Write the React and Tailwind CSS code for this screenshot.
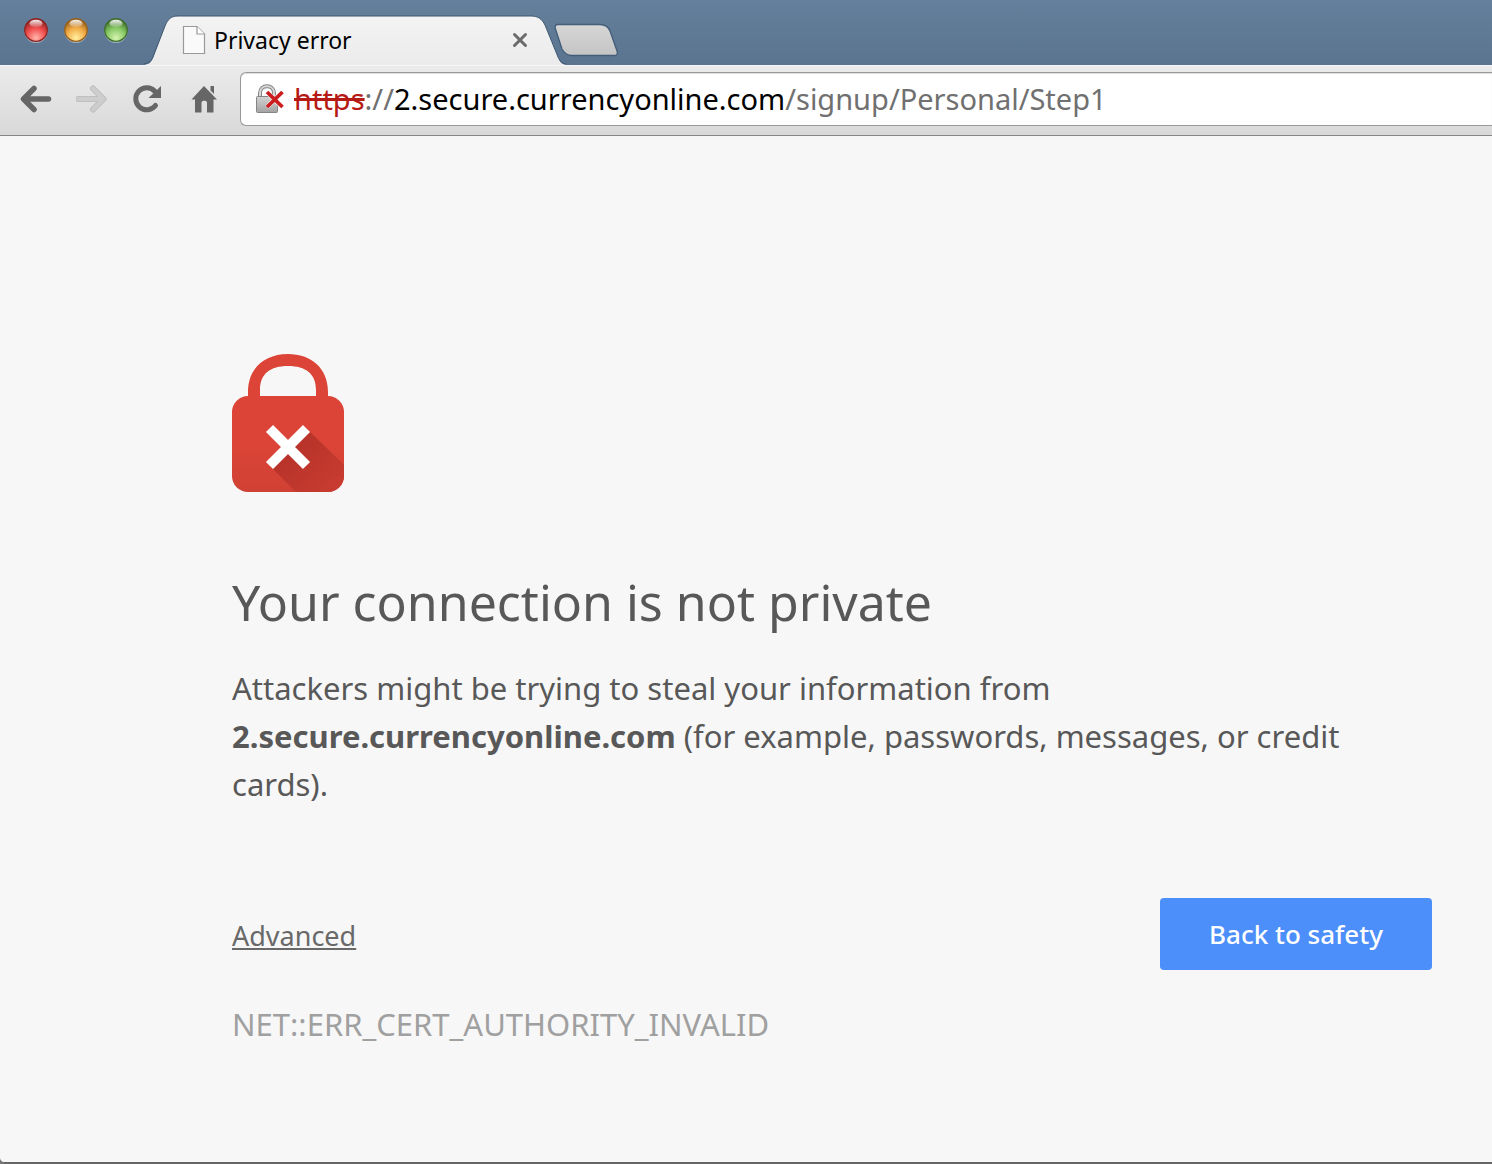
import { useState } from "react";

const PAGE_URL = "https://2.secure.currencyonline.com/signup/Personal/Step1";

const TrafficLight = ({ id, label, edge, base, glow }) => (
  <button type="button" aria-label={label} className="h-7 w-6">
    <svg viewBox="0 0 24 28" className="h-7 w-6">
      <defs>
        <radialGradient id={id} cx="0.5" cy="0.85" r="0.8">
          <stop offset="0" stopColor={glow} />
          <stop offset="0.55" stopColor={base} />
          <stop offset="1" stopColor={edge} />
        </radialGradient>
        <linearGradient id={`${id}-shine`} x1="0" y1="0" x2="0" y2="1">
          <stop offset="0" stopColor="#fff" stopOpacity="0.95" />
          <stop offset="1" stopColor="#fff" stopOpacity="0.1" />
        </linearGradient>
      </defs>
      <circle cx="12" cy="14.5" r="11.5" fill="#c3d0dc" opacity="0.6" />
      <circle cx="12" cy="13" r="11.3" fill={`url(#${id})`} stroke={edge} strokeWidth="1.3" />
      <ellipse cx="12" cy="6.5" rx="6.5" ry="3.8" fill={`url(#${id}-shine)`} />
    </svg>
  </button>
);

const TabStrip = () => (
  <header className="flex h-[65px] items-end bg-linear-to-b from-[#65809c] to-[#5a7490]">
    <div className="flex gap-4 self-start pt-[17px] pl-6">
      <TrafficLight id="close" label="Close window" edge="#8d2422" base="#f04c4c" glow="#ffb5ac" />
      <TrafficLight id="minimize" label="Minimize window" edge="#96601c" base="#f2ab45" glow="#fff0a0" />
      <TrafficLight id="zoom" label="Zoom window" edge="#3f6f2c" base="#86c763" glow="#d5f5b0" />
    </div>

    <div className="relative ml-4 flex h-[50px] w-[422px] items-center px-[38px]">
      <svg viewBox="0 0 422 50" className="absolute inset-0 h-full w-full" aria-hidden="true">
        <defs>
          <linearGradient id="tab" x1="0" y1="0" x2="0" y2="1">
            <stop offset="0" stopColor="#f3f3f3" />
            <stop offset="1" stopColor="#ebebeb" />
          </linearGradient>
        </defs>
        <path
          d="M0 50 C6 49 7 47 9 43 L21 11 C24 4 27 1 34 1 H387 C394 1 398 4 401 10 L414 42 C416 47 417 49 422 50 Z"
          fill="url(#tab)"
        />
        <path
          d="M0 49 C6 48 7 46 9 42 L21 11 C24 4 27 1 34 1 H387 C394 1 398 4 401 10 L414 42 C416 46 417 48 422 49"
          fill="none"
          stroke="#3f5871"
        />
      </svg>
      <button type="button" className="relative flex flex-1 items-center gap-2 text-[23px] leading-8 text-black">
        <svg viewBox="0 0 24 30" className="h-[30px] w-6" aria-hidden="true">
          <path d="M1.5 1.5 H15 L22.5 9 V28.5 H1.5 Z" fill="#fafafa" stroke="#999" strokeWidth="1.2" />
          <path d="M15 1.5 V9 H22.5" fill="#fff" stroke="#999" strokeWidth="1.2" />
        </svg>
        Privacy error
      </button>
      <button type="button" aria-label="Close tab" className="relative">
        <svg viewBox="0 0 16 16" className="h-4 w-4">
          <path d="M2.5 2.5 L13.5 13.5 M13.5 2.5 L2.5 13.5" stroke="#6b6b6b" strokeWidth="3" strokeLinecap="round" />
        </svg>
      </button>
    </div>

    <button type="button" aria-label="New tab" className="-ml-3 mb-2">
      <svg viewBox="0 0 64 34" className="h-[34px] w-16">
        <defs>
          <linearGradient id="new-tab" x1="0" y1="0" x2="0" y2="1">
            <stop offset="0" stopColor="#d6d6d6" />
            <stop offset="1" stopColor="#c4c4c4" />
          </linearGradient>
        </defs>
        <path
          d="M4 1.5 H46 C51 1.5 54 3 56 8 L63 28 C64 31 63 32.5 60 32.5 H18 C13 32.5 10 30 8 26 L1.5 6 C0.500 3 1.500 1.5 4 1.5 Z"
          fill="url(#new-tab)"
          stroke="#435d78"
          strokeWidth="1.3"
        />
      </svg>
    </button>
  </header>
);

const BrokenLock = () => (
  <svg viewBox="0 0 30 32" className="h-8 w-[30px] shrink-0" aria-hidden="true">
    <defs>
      <linearGradient id="small-lock" x1="0" y1="0" x2="0" y2="1">
        <stop offset="0" stopColor="#d2d2d2" />
        <stop offset="1" stopColor="#a3a3a3" />
      </linearGradient>
    </defs>
    <path d="M5 13 V10 C5 1 19 1 19 10 V13" fill="none" stroke="#858585" strokeWidth="4" />
    <path d="M5 13 V10 C5 1 19 1 19 10 V13" fill="none" stroke="#d8d8d8" strokeWidth="2" />
    <rect x="1.5" y="13.5" width="21" height="16" rx="1" fill="url(#small-lock)" stroke="#858585" />
    <path d="M12 9 L27 24 M27 9 L12 24" stroke="#fff" strokeWidth="5" opacity="0.7" />
    <path d="M12 9 L27.5 24 M27.5 9 L12 24" stroke="#cb1d1d" strokeWidth="3.8" />
  </svg>
);

// The coloured URL is shown until the field gets focus.
const Omnibox = () => {
  const [url, setUrl] = useState(PAGE_URL);
  const [editing, setEditing] = useState(false);

  return (
    <div className="relative flex h-[54px] flex-1 items-center rounded-l-md border border-r-0 border-[#999] bg-white pl-[14px] shadow-[inset_0_1px_1px_#ddd]">
      <BrokenLock />
      <input
        type="text"
        aria-label="Address"
        value={editing ? url : ""}
        onChange={(e) => setUrl(e.target.value)}
        onFocus={() => setEditing(true)}
        onBlur={() => setEditing(false)}
        className="h-full flex-1 pl-2 text-[29px] text-black outline-none"
      />
      {!editing && (
        <p className="pointer-events-none absolute left-[53px] text-[29px] leading-10 whitespace-nowrap text-[#707070]">
          <span className="text-[#b51a14] line-through decoration-3">https</span>://
          <span className="text-black">2.secure.currencyonline.com</span>
          /signup/Personal/Step1
        </p>
      )}
    </div>
  );
};

const Toolbar = () => (
  <nav className="flex h-[71px] items-center border-t border-b border-t-[#f6f6f6] border-b-[#858585] bg-linear-to-b from-[#ebebeb] to-[#d9d9d9] pb-[3px] pl-5">
    <div className="mr-5 flex items-center gap-6">
      <button type="button" aria-label="Back">
        <svg viewBox="0 0 32 28" className="h-7 w-8">
          <path d="M14 3.5 L3.5 14 L14 24.5 M4 14 H28.5" fill="none" stroke="#666" strokeWidth="5.5" strokeLinecap="round" strokeLinejoin="round" />
        </svg>
      </button>
      <button type="button" aria-label="Forward" disabled>
        <svg viewBox="0 0 32 28" className="h-7 w-8">
          <path d="M17 3.5 L27.5 14 L17 24.5 M27 14 H2.5" fill="none" stroke="#bababa" strokeWidth="6" strokeLinecap="round" strokeLinejoin="round" />
          <path d="M17 3.5 L27.5 14 L17 24.5 M27 14 H2.5" fill="none" stroke="#cdcdcd" strokeWidth="4.5" strokeLinecap="round" strokeLinejoin="round" />
        </svg>
      </button>
      <button type="button" aria-label="Reload">
        <svg viewBox="0 0 32 28" className="h-7 w-8">
          <path d="M23 6.5 A11 11 0 1 0 23.5 20.5" fill="none" stroke="#666" strokeWidth="5" strokeLinecap="round" />
          <path d="M29 1 V13 H16.5 Z" fill="#666" />
        </svg>
      </button>
      <button type="button" aria-label="Home">
        <svg viewBox="0 0 32 28" className="h-7 w-8">
          <path d="M16 1 L29 14.5 H25.5 V27.5 H19 V17.5 C19 15 13.5 15 13.5 17.5 V27.5 H7 V14.5 H3.500 Z" fill="#666" />
          <path d="M22.5 1 H26 V9 L22.5 5.5 Z" fill="#666" />
        </svg>
      </button>
    </div>
    <Omnibox />
  </nav>
);

const WarningLock = () => (
  <svg viewBox="0 0 112 138" className="h-[138px] w-28" role="img" aria-label="Broken lock">
    <defs>
      <linearGradient id="lock-body" x1="0" y1="0" x2="0" y2="1">
        <stop offset="0.5" stopColor="#dc4437" />
        <stop offset="1" stopColor="#cf4134" />
      </linearGradient>
      <linearGradient id="lock-shadow" x1="0" y1="0" x2="1" y2="1">
        <stop offset="0.2" stopColor="#b8332a" />
        <stop offset="0.7" stopColor="#cb3d31" />
      </linearGradient>
      <clipPath id="lock-clip">
        <rect y="42" width="112" height="96" rx="16" />
      </clipPath>
    </defs>
    <path d="M16 43 V38 C16 14 33 0 56 0 C79 0 96 14 96 38 V43 H84 V36 C84 20 74 12 56 12 C38 12 28 20 28 36 V43 Z" fill="#dc4437" />
    <rect y="42" width="112" height="96" rx="16" fill="url(#lock-body)" />
    <path d="M78 78 L138 136 V170 H96 L41 115 L56 93 Z" fill="url(#lock-shadow)" clipPath="url(#lock-clip)" />
    <path d="M37.5 74.5 L74.5 111.5 M74.5 74.5 L37.5 111.5" stroke="#fff" strokeWidth="10" />
  </svg>
);

const App = () => (
  <div className="relative flex min-h-screen flex-col bg-[#f7f7f7] font-['Noto_Sans',sans-serif]">
    <TabStrip />
    <Toolbar />
    <main className="flex-1 border-b-2 border-[#666] pt-[218px] pr-[60px] pl-[232px] text-[#585858]">
      <WarningLock />
      <h1 className="mt-[78px] text-[50px] leading-[64px]">Your connection is not private</h1>
      <p className="mt-[30px] text-[31px] leading-[48px]">
        Attackers might be trying to steal your information from{" "}
        <strong>2.secure.currencyonline.com</strong> (for example, passwords, messages, or credit cards).
      </p>
      <div className="mt-[90px] flex items-center justify-between">
        <a href="#advanced" className="pt-1 text-[27px] leading-10 text-[#696969] underline decoration-2 underline-offset-2">
          Advanced
        </a>
        <button type="button" className="h-[72px] min-w-[272px] rounded-sm bg-[#4c8efa] px-8 text-[26px] font-medium text-white">
          Back to safety
        </button>
      </div>
      <p className="mt-[30px] text-[31px] leading-[48px] text-[#a0a0a0]">NET::ERR_CERT_AUTHORITY_INVALID</p>
    </main>
    {/* rounded window corner */}
    <svg viewBox="0 0 4 6" className="absolute bottom-0 left-0 h-1.5 w-1" aria-hidden="true">
      <path d="M0 0 C0 2 2 4 4 4 V6 H0 Z" fill="#777" />
    </svg>
  </div>
);

export default App;
